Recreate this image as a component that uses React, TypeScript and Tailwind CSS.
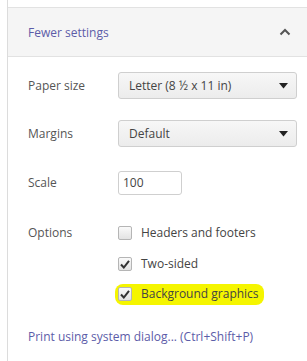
import { ReactNode } from "react";

const font = { fontFamily: '"Open Sans", "Noto Sans", sans-serif' };

function Row({ label, children, className }: { label: string; children: ReactNode; className?: string }) {
  return (
    <div className={`flex items-center ${className ?? ""}`}>
      <div className="w-[90px] text-[12px] text-[#555]">{label}</div>
      {children}
    </div>
  );
}

function Select({ value }: { value: string }) {
  return (
    <div className="flex h-[27px] w-[179px] items-center justify-between rounded-[3px] border border-[#cfcfcf] bg-gradient-to-b from-[#f7f7f7] to-[#ececec] pl-[10px] pr-[8px] text-[12px] text-[#444]">
      <span>{value}</span>
      <svg width="9" height="6" viewBox="0 0 9 6">
        <path d="M0 0 H9 L4.5 5.5 Z" fill="#222" />
      </svg>
    </div>
  );
}

function Check({ checked, label, highlight }: { checked: boolean; label: string; highlight?: boolean }) {
  return (
    <div className="relative flex h-[18px] items-center gap-[9px]">
      {highlight && <div className="absolute left-[-3px] top-[-1px] h-[21px] w-[149px] rounded-[8px] bg-[#f5f500]" />}
      <div className="relative flex h-[14px] w-[14px] items-center justify-center rounded-[2px] border border-[#b5b5b5] bg-gradient-to-b from-[#fafafa] to-[#e3e3e3]">
        {checked && (
          <svg width="10" height="9" viewBox="0 0 10 9">
            <path d="M1 4.5 L3.8 7.5 L9 0.8" stroke="#333" strokeWidth="2" fill="none" />
          </svg>
        )}
      </div>
      <span className="relative text-[12px] text-[#444]">{label}</span>
    </div>
  );
}

export default function App() {
  return (
    <div className="h-[361px] w-[307px] overflow-hidden bg-white pl-[7px]" style={font}>
      <div className="h-full border-l border-[#dcdcdc] pt-[7px]">
        <div className="flex h-[50px] items-center justify-between border-y border-[#e2e2e2] bg-[#f5f5f5] pl-[20px] pr-[16px]">
          <span className="mt-[2px] text-[12px] text-[#5c5ca8]">Fewer settings</span>
          <svg width="12" height="8" viewBox="0 0 12 8">
            <path d="M1.5 6.5 L6 2 L10.5 6.5" stroke="#555" strokeWidth="2" fill="none" />
          </svg>
        </div>
        <div className="pl-[20px]">
          <Row label="Paper size" className="mt-[15px]">
            <Select value="Letter (8 ½ x 11 in)" />
          </Row>
          <Row label="Margins" className="mt-[21px]">
            <Select value="Default" />
          </Row>
          <Row label="Scale" className="mt-[24px]">
            <div className="flex h-[24px] w-[64px] items-center rounded-[3px] border border-[#cfcfcf] bg-white pl-[4px] text-[12px] text-[#444]">
              100
            </div>
          </Row>
          <Row label="Options" className="mt-[29px]">
            <Check checked={false} label="Headers and footers" />
          </Row>
          <div className="mt-[13px] pl-[90px]">
            <Check checked label="Two-sided" />
          </div>
          <div className="mt-[12px] pl-[90px]">
            <Check checked highlight label="Background graphics" />
          </div>
          <div className="mt-[25px] text-[12px] text-[#5c5ca8]">Print using system dialog... (Ctrl+Shift+P)</div>
        </div>
      </div>
    </div>
  );
}
